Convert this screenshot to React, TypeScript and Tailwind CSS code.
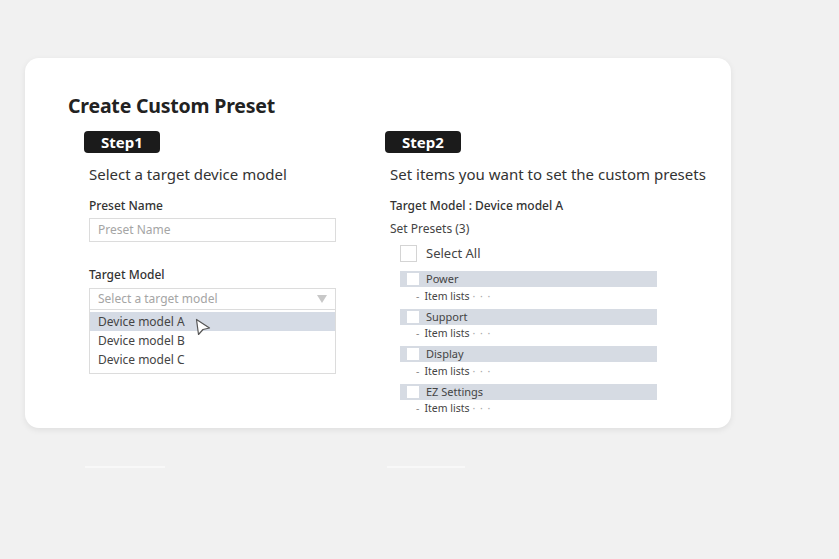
import React from "react";

const PRESETS = ["Power", "Support", "Display", "EZ Settings"];
const MODELS = ["Device model A", "Device model B", "Device model C"];

function StepBadge({ label }: { label: string }) {
  return (
    <div className="w-[76px] h-[22px] rounded-[4px] bg-[#1b1b1b] text-white text-[15px] font-bold leading-[22px] text-center">
      {label}
    </div>
  );
}

function Cursor() {
  return (
    <svg
      className="absolute left-[105px] top-[8px]"
      width="16"
      height="18"
      viewBox="0 0 16 18"
      fill="none"
    >
      <path d="M1.5 1.5 L3.5 16.5 L8 11.5 L14.5 10 Z" fill="#fff" stroke="#555" strokeWidth="1.2" strokeLinejoin="round" />
    </svg>
  );
}

export default function App() {
  return (
    <div
      className="w-[839px] h-[559px] bg-[#f1f1f1] pt-[58px] pl-[25px] overflow-hidden"
      style={{ fontFamily: '"Noto Sans", "Open Sans", sans-serif' }}
    >
      <div className="w-[706px] h-[370px] bg-white rounded-[14px] shadow-[0_2px_6px_rgba(0,0,0,0.08)] pt-[34px] pl-[43px]">
        <h1 className="text-[19.5px] font-bold leading-[28px] text-[#222] tracking-[-0.2px]">Create Custom Preset</h1>

        <div className="flex mt-[11px] ml-[16px]">
          {/* Step 1 */}
          <div className="w-[301px]">
            <StepBadge label="Step1" />
            <div className="pl-[5px]">
              <p className="mt-[10px] text-[15px] leading-[22px] text-[#333]">Select a target device model</p>

              <p className="mt-[13px] text-[12px] leading-[16px] font-medium text-[#333]">Preset Name</p>
              <div className="mt-[4px] w-[247px] h-[24px] border border-[#dcdcdc] px-[8px] text-[12px] leading-[22px] text-[#a5a5a5]">
                Preset Name
              </div>

              <p className="mt-[25px] text-[12px] leading-[16px] font-medium text-[#333]">Target Model</p>
              <div className="mt-[5px] w-[247px] h-[22px] border border-[#dcdcdc] px-[8px] flex items-center justify-between text-[12px] text-[#a5a5a5]">
                <span>Select a target model</span>
                <svg width="10" height="8" viewBox="0 0 10 8">
                  <path d="M0 0 H10 L5 8 Z" fill="#c8c8c8" />
                </svg>
              </div>
              <div className="relative w-[247px] h-[64px] border border-t-0 border-[#dcdcdc] pt-[2px]">
                {MODELS.map((m, i) => (
                  <div
                    key={m}
                    className={`h-[19px] px-[8px] text-[12px] leading-[19px] text-[#444] ${i === 0 ? "bg-[#d5dbe5]" : ""}`}
                  >
                    {m}
                  </div>
                ))}
                <Cursor />
              </div>
            </div>
          </div>

          {/* Step 2 */}
          <div className="flex-1">
            <StepBadge label="Step2" />
            <div className="pl-[5px]">
              <p className="mt-[10px] text-[15px] leading-[22px] text-[#333]">Set items you want to set the custom presets</p>
              <p className="mt-[13px] text-[12px] leading-[16px] font-medium text-[#333]">Target Model : Device model A</p>
              <p className="mt-[7px] text-[12px] leading-[16px] text-[#444]">Set Presets (3)</p>

              <div className="mt-[8px] ml-[10px] flex items-center">
                <div className="w-[17px] h-[17px] border border-[#d4d4d4] bg-white" />
                <span className="ml-[9px] text-[13px] leading-[17px] text-[#444]">Select All</span>
              </div>

              <div className="mt-[9px] ml-[10px] flex flex-col gap-[4.5px]">
                {PRESETS.map((p) => (
                  <div key={p}>
                    <div className="w-[257px] h-[16px] bg-[#d6dbe3] flex items-center pl-[7px]">
                      <div className="w-[12px] h-[12px] bg-white" />
                      <span className="ml-[7px] text-[11px] leading-[16px] text-[#444]">{p}</span>
                    </div>
                    <div className="h-[17px] pt-[2px] flex items-center pl-[16px] text-[10.5px] text-[#444]">
                      <span className="text-[#888]">-</span>
                      <span className="ml-[5px]">Item lists</span>
                      <span className="ml-[3px] text-[#aaa] tracking-[1px]">· · ·</span>
                    </div>
                  </div>
                ))}
              </div>
            </div>
          </div>
        </div>
      </div>

      <div className="flex mt-[38px] ml-[60px] gap-[222px] opacity-50">
        <div className="w-[80px] h-[2px] bg-white" />
        <div className="w-[78px] h-[2px] bg-white" />
      </div>
    </div>
  );
}
